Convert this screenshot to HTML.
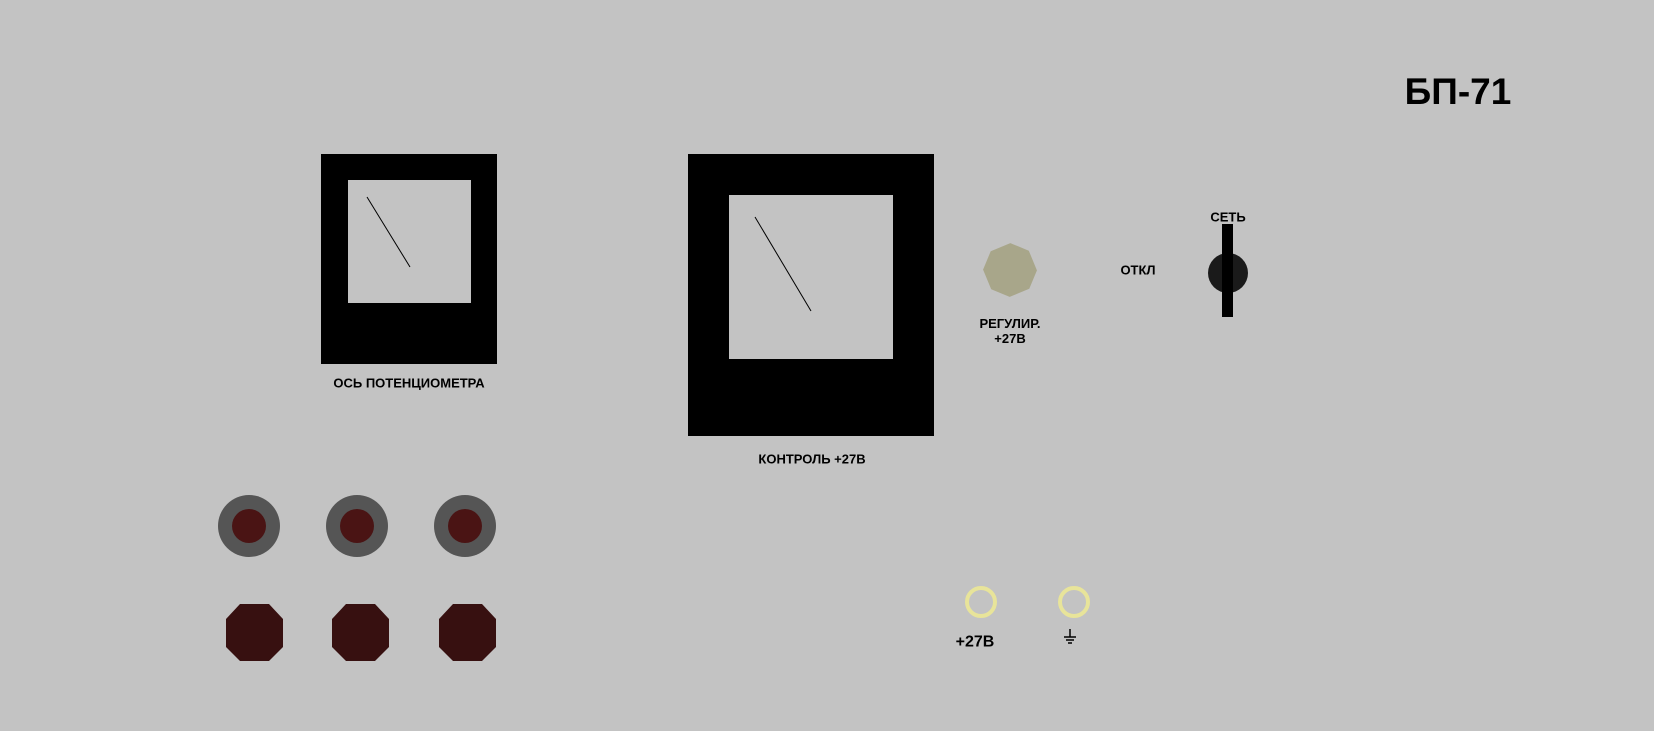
<!DOCTYPE html>
<html><head><meta charset="utf-8"><style>
body{margin:0;width:1654px;height:731px;background:#c3c3c3;position:relative;overflow:hidden;font-family:"Liberation Sans",sans-serif;font-weight:bold;color:#000}
.t{position:absolute;transform:translate(-50%,-50%);white-space:nowrap;font-size:13px;line-height:15px;text-align:center}
</style></head><body>
<svg width="1654" height="731" style="position:absolute;left:0;top:0">
<rect x="321" y="154" width="176" height="210" fill="#000"/>
<rect x="348" y="180" width="123" height="123" fill="#c3c3c3"/>
<line x1="367" y1="197" x2="410" y2="267" stroke="#000" stroke-width="1"/>
<rect x="688" y="154" width="246" height="282" fill="#000"/>
<rect x="729" y="195" width="164" height="164" fill="#c3c3c3"/>
<line x1="755" y1="217" x2="811" y2="311" stroke="#000" stroke-width="1"/>
<polygon points="1000,245 1020,245 1035,260 1035,280 1020,295 1000,295 985,280 985,260" fill="#a8a68a" transform="rotate(22.5 1010 270)"/>
<ellipse cx="1228" cy="273" rx="20" ry="20" fill="#1a1a1a"/>
<rect x="1222" y="224" width="11" height="93" fill="#000"/>
<g fill="#555"><circle cx="249" cy="526" r="31"/><circle cx="357" cy="526" r="31"/><circle cx="465" cy="526" r="31"/></g>
<g fill="#4a1414"><circle cx="249" cy="526" r="17"/><circle cx="357" cy="526" r="17"/><circle cx="465" cy="526" r="17"/></g>
<g fill="#371010">
<polygon points="240,604 269,604 283,619 283,647 269,661 240,661 226,647 226,619"/>
<polygon points="346,604 375,604 389,619 389,647 375,661 346,661 332,647 332,619"/>
<polygon points="453,604 482,604 496,619 496,647 482,661 453,661 439,647 439,619"/>
</g>
<circle cx="981" cy="602" r="14" fill="none" stroke="#e8e49a" stroke-width="4"/>
<circle cx="1074" cy="602" r="14" fill="none" stroke="#e8e49a" stroke-width="4"/>
<g stroke="#000" stroke-width="1.5"><line x1="1070" y1="629" x2="1070" y2="637"/><line x1="1064" y1="637" x2="1076" y2="637"/><line x1="1066" y1="640" x2="1074" y2="640"/><line x1="1068" y1="643" x2="1072" y2="643"/></g>
</svg>
<div class="t" style="left:1458px;top:92px;font-size:37px;line-height:40px">БП-71</div>
<div class="t" style="left:409px;top:383px">ОСЬ ПОТЕНЦИОМЕТРА</div>
<div class="t" style="left:812px;top:459px">КОНТРОЛЬ +27В</div>
<div class="t" style="left:1010px;top:331px">РЕГУЛИР.<br>+27В</div>
<div class="t" style="left:1138px;top:270px">ОТКЛ</div>
<div class="t" style="left:1228px;top:217px">СЕТЬ</div>
<div class="t" style="left:975px;top:642px;font-size:16px">+27В</div>
</body></html>
